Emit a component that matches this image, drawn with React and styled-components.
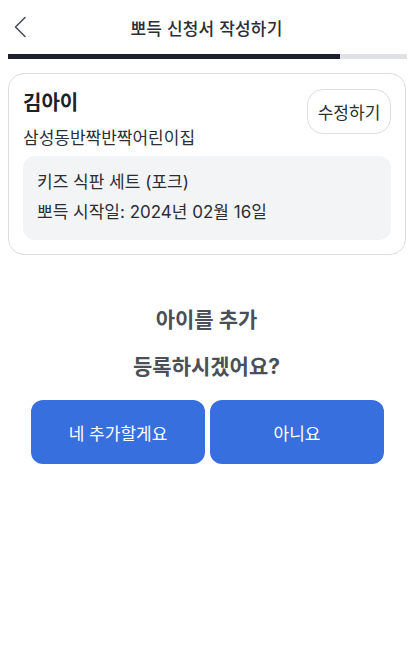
import React from 'react';
import styled, { createGlobalStyle } from 'styled-components';

const GlobalStyle = createGlobalStyle`
  body {
    margin: 0;
    background: #fff;
    font-family: Inter, "Noto Sans CJK KR", sans-serif;
  }
`;

export default function App() {
  return (
    <>
      <GlobalStyle />
      <Page>
        <Header>
          <BackButton aria-label="back">
            <svg width="14" height="22" viewBox="0 0 14 22" fill="none">
              <path d="M12 1.5L2.5 11L12 20.5" stroke="#4b4f58" strokeWidth="1.6" strokeLinecap="round" strokeLinejoin="round" />
            </svg>
          </BackButton>
          <HeaderTitle>뽀득 신청서 작성하기</HeaderTitle>
        </Header>
        <Progress>
          <ProgressFill style={{ width: '83.2%' }} />
        </Progress>

        <Card>
          <CardTop>
            <CardInfo>
              <Name>김아이</Name>
              <School>삼성동반짝반짝어린이집</School>
            </CardInfo>
            <EditButton>수정하기</EditButton>
          </CardTop>
          <DetailBox>
            <DetailText>키즈 식판 세트 (포크)</DetailText>
            <DetailText>뽀득 시작일: 2024년 02월 16일</DetailText>
          </DetailBox>
        </Card>

        <Question>
          <QuestionLine>아이를 추가</QuestionLine>
          <QuestionLine>등록하시겠어요?</QuestionLine>
        </Question>

        <Actions>
          <ActionButton>네 추가할게요</ActionButton>
          <ActionButton>아니요</ActionButton>
        </Actions>
      </Page>
    </>
  );
}

const Page = styled.div`
  width: 413px;
  min-height: 655px;
  display: flex;
  flex-direction: column;
  background: #fff;
`;

const Header = styled.div`
  position: relative;
  height: 54px;
  display: flex;
  align-items: center;
  justify-content: center;
`;

const BackButton = styled.button`
  position: absolute;
  left: 13px;
  top: 16px;
  padding: 0;
  border: none;
  background: none;
  display: flex;
`;

const HeaderTitle = styled.div`
  font-size: 17px;
  font-weight: 500;
  color: #2b2e35;
  letter-spacing: 0.2px;
`;

const Progress = styled.div`
  margin: 0 6px 0 8px;
  height: 5px;
  background: #dfe1e6;
`;

const ProgressFill = styled.div`
  height: 100%;
  background: #1c202c;
`;

const Card = styled.div`
  margin: 14px 7px 0 8px;
  padding: 15px 14px 14px 14px;
  border: 1px solid #dcdde2;
  border-radius: 16px;
  display: flex;
  flex-direction: column;
  gap: 5px;
`;

const CardTop = styled.div`
  display: flex;
  justify-content: space-between;
  align-items: flex-start;
`;

const CardInfo = styled.div`
  display: flex;
  flex-direction: column;
  gap: 8px;
`;

const Name = styled.div`
  font-size: 20px;
  font-weight: 700;
  color: #1d2027;
  line-height: 28px;
`;

const School = styled.div`
  font-size: 17px;
  color: #2b2e35;
  line-height: 26px;
`;

const EditButton = styled.button`
  width: 84px;
  height: 45px;
  border: 1px solid #dcdde2;
  border-radius: 16px;
  background: #fff;
  font-family: inherit;
  font-size: 17px;
  color: #2b2e35;
`;

const DetailBox = styled.div`
  background: #f3f4f6;
  border-radius: 12px;
  padding: 13px 14px 15px 14px;
  display: flex;
  flex-direction: column;
  gap: 4px;
`;

const DetailText = styled.div`
  font-size: 17px;
  color: #2b2e35;
  line-height: 26px;
`;

const Question = styled.div`
  margin-top: 50px;
  display: flex;
  flex-direction: column;
  align-items: center;
  gap: 18px;
`;

const QuestionLine = styled.div`
  font-size: 21px;
  font-weight: 700;
  color: #4b4f58;
  line-height: 29px;
`;

const Actions = styled.div`
  margin-top: 19px;
  padding: 0 29px 0 31px;
  display: grid;
  grid-template-columns: 1fr 1fr;
  gap: 5px;
`;

const ActionButton = styled.button`
  height: 64px;
  border: none;
  border-radius: 12px;
  background: #386fdf;
  color: #fff;
  font-family: inherit;
  font-size: 17px;
`;
